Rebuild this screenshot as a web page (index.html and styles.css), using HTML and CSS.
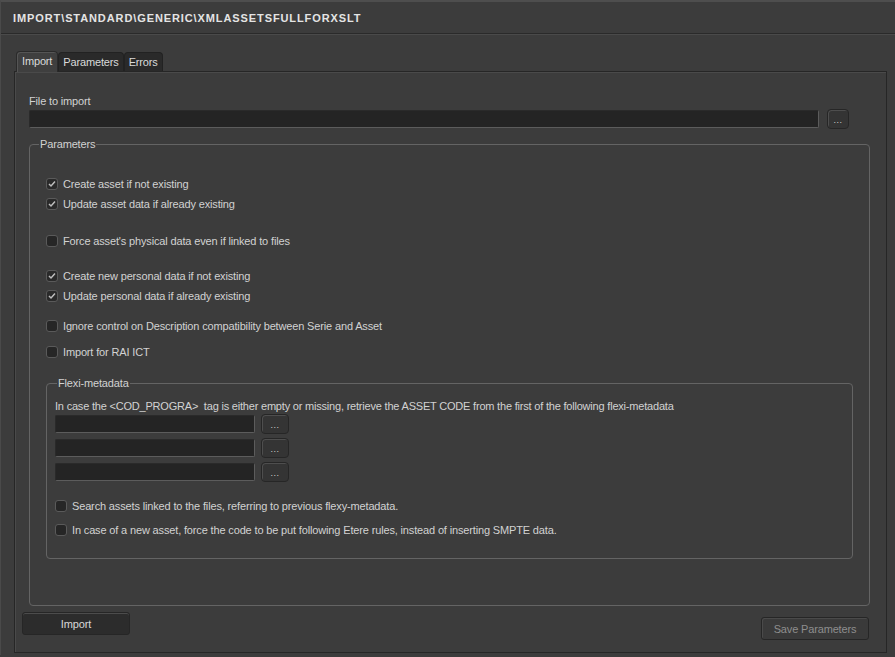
FILE: index.html
```html
<!DOCTYPE html>
<html lang="en">
<head>
    <meta charset="UTF-8">
    <title>Import</title>
    <link rel="stylesheet" href="styles.css">
</head>
<body>
    <div class="window">
        <div class="titlebar">IMPORT\STANDARD\GENERIC\XMLASSETSFULLFORXSLT</div>

        <div class="tabs">
            <div class="tab active">Import</div>
            <div class="tab">Parameters</div>
            <div class="tab">Errors</div>
        </div>

        <div class="panel">
            <div class="field-label">File to import</div>
            <div class="file-row">
                <div class="input wide"></div>
                <div class="btn-dots">...</div>
            </div>

            <fieldset class="group params">
                <legend>Parameters</legend>

                <div class="check-row first"><span class="check on"></span>Create asset if not existing</div>
                <div class="check-row"><span class="check on"></span>Update asset data if already existing</div>

                <div class="check-row gap-lg"><span class="check"></span>Force asset's physical data even if linked to files</div>

                <div class="check-row gap-md"><span class="check on"></span>Create new personal data if not existing</div>
                <div class="check-row"><span class="check on"></span>Update personal data if already existing</div>

                <div class="check-row gap-sm"><span class="check"></span>Ignore control on Description compatibility between Serie and Asset</div>
                <div class="check-row gap-xs"><span class="check"></span>Import for RAI ICT</div>

                <fieldset class="group flexi">
                    <legend>Flexi-metadata</legend>
                    <div class="flexi-note">In case the &lt;COD_PROGRA&gt;&nbsp; tag is either empty or missing, retrieve the ASSET CODE from the first of the following flexi-metadata</div>
                    <div class="meta-row top"><div class="input short"></div><div class="btn-dots">...</div></div>
                    <div class="meta-row"><div class="input short"></div><div class="btn-dots">...</div></div>
                    <div class="meta-row"><div class="input short"></div><div class="btn-dots">...</div></div>

                    <div class="check-row flexi-first"><span class="check"></span>Search assets linked to the files, referring to previous flexy-metadata.</div>
                    <div class="check-row flexi-second"><span class="check"></span>In case of a new asset, force the code to be put following Etere rules, instead of inserting SMPTE data.</div>
                </fieldset>
            </fieldset>

            <div class="actions">
                <div class="btn import">Import</div>
                <div class="btn save">Save Parameters</div>
            </div>
        </div>
    </div>
</body>
</html>
```

FILE: styles.css
```css
body {
    margin: 0;
    background-color: #3c3c3c;
    font-family: "Liberation Sans", Arial, sans-serif;
    font-size: 11px;
    letter-spacing: -0.15px;
    color: #d2d2d2;
}
.window {
    height: 655px;
    border-top: 2px solid #4e4e4e;
    border-left: 1px solid #4a4a4a;
    box-sizing: border-box;
    width: 895px;
    overflow: hidden;
}
.titlebar {
    height: 31px;
    line-height: 32px;
    padding-left: 12px;
    font-weight: bold;
    font-size: 11px;
    letter-spacing: 0.9px;
    color: #e4e4e4;
    border-bottom: 1px solid #2a2a2a;
    box-shadow: 0 1px 0 #4a4a4a;
}
.tabs {
    display: flex;
    align-items: flex-end;
    margin-top: 17px;
    padding-left: 15px;
    height: 20px;
}
.tab {
    height: 18px;
    line-height: 18px;
    padding: 0 4px;
    background-color: #2a2a2a;
    border: 1px solid #222;
    border-bottom: none;
    border-radius: 4px 4px 0 0;
    color: #dadada;
}
.tab.active {
    height: 20px;
    line-height: 19px;
    padding: 0 5px;
    background-color: #3f3f3f;
    border-color: #2a2a2a;
    box-shadow: inset 1px 1px 0 #555;
    position: relative;
    top: 1px;
}
.panel {
    margin-left: 13px;
    width: 873px;
    height: 582px;
    border: 1px solid #262626;
    box-shadow: inset 1px 1px 0 #4a4a4a;
    box-sizing: border-box;
    padding: 23px 17px 0 14px;
}
.field-label {
    height: 13px;
}
.file-row {
    display: flex;
    align-items: center;
    height: 20px;
    margin-top: 1px;
}
.input {
    height: 18px;
    box-sizing: border-box;
    background-color: #242424;
    border: 1px solid #5c5c5c;
    border-top-color: #2a2a2a;
    border-left-color: #2a2a2a;
    border-radius: 2px;
}
.input.wide {
    width: 790px;
}
.input.short {
    width: 200px;
}
.btn-dots {
    width: 22px;
    height: 20px;
    box-sizing: border-box;
    margin-left: 8px;
    background-color: #343434;
    border: 1px solid #262626;
    border-radius: 4px;
    box-shadow: inset 1px 1px 0 #4e4e4e;
    text-align: center;
    line-height: 20px;
    color: #cfcfcf;
    font-size: 9px;
    letter-spacing: 0.5px;
}
.group {
    margin: 0;
    padding: 0;
    border: 1px solid #646464;
    border-radius: 4px;
    box-sizing: border-box;
}
.group legend {
    padding: 0 1px;
    height: 13px;
    line-height: 13px;
}
.params {
    margin-top: 9px;
    width: 841px;
    height: 468px;
    padding: 0 0 0 16px;
}
.params > legend {
    margin-left: -7px;
}
.check-row {
    display: flex;
    align-items: center;
    height: 14px;
    margin-top: 6px;
    white-space: nowrap;
}
.check-row.first {
    margin-top: 26px;
}
.check-row.gap-lg {
    margin-top: 23px;
}
.check-row.gap-md {
    margin-top: 21px;
}
.check-row.gap-sm {
    margin-top: 16px;
}
.check-row.gap-xs {
    margin-top: 12px;
}
.check {
    width: 12px;
    height: 12px;
    box-sizing: border-box;
    margin-right: 5px;
    background-color: #262626;
    border: 1px solid #5a5a5a;
    border-radius: 3px;
    flex: none;
}
.check.on {
    background-color: #2a2a2a;
    background-image: url("data:image/svg+xml;utf8,<svg xmlns='http://www.w3.org/2000/svg' width='10' height='10' viewBox='0 0 10 10'><path d='M2 5 L4 7 L8 2.5' fill='none' stroke='%23bdbdbd' stroke-width='1.5'/></svg>");
    background-repeat: no-repeat;
    background-position: center;
}
.flexi {
    margin-top: 18px;
    width: 807px;
    height: 182px;
    padding: 0 0 0 8px;
}
.flexi > legend {
    margin-left: 2px;
}
.flexi-note {
    margin-top: 10px;
    height: 13px;
    white-space: nowrap;
    letter-spacing: -0.2px;
}
.meta-row {
    display: flex;
    align-items: center;
    height: 20px;
    margin-top: 4px;
}
.meta-row.top {
    margin-top: 1px;
}
.meta-row .btn-dots {
    width: 28px;
    margin-left: 6px;
}
.check-row.flexi-first {
    margin-top: 17px;
}
.check-row.flexi-second {
    margin-top: 10px;
}
.actions {
    display: flex;
    justify-content: space-between;
    align-items: flex-start;
    margin: 6px 0 0 -7px;
}
.btn {
    height: 23px;
    line-height: 22px;
    box-sizing: border-box;
    text-align: center;
    border-radius: 3px;
    border: 1px solid #262626;
}
.btn.import {
    width: 108px;
    background-color: #2c2c2c;
    box-shadow: inset 0 1px 0 #4c4c4c;
    color: #d8d8d8;
}
.btn.save {
    width: 108px;
    margin-top: 5px;
    background-color: #3a3a3a;
    box-shadow: inset 1px 1px 0 #4a4a4a;
    color: #8e8e8e;
}
```
